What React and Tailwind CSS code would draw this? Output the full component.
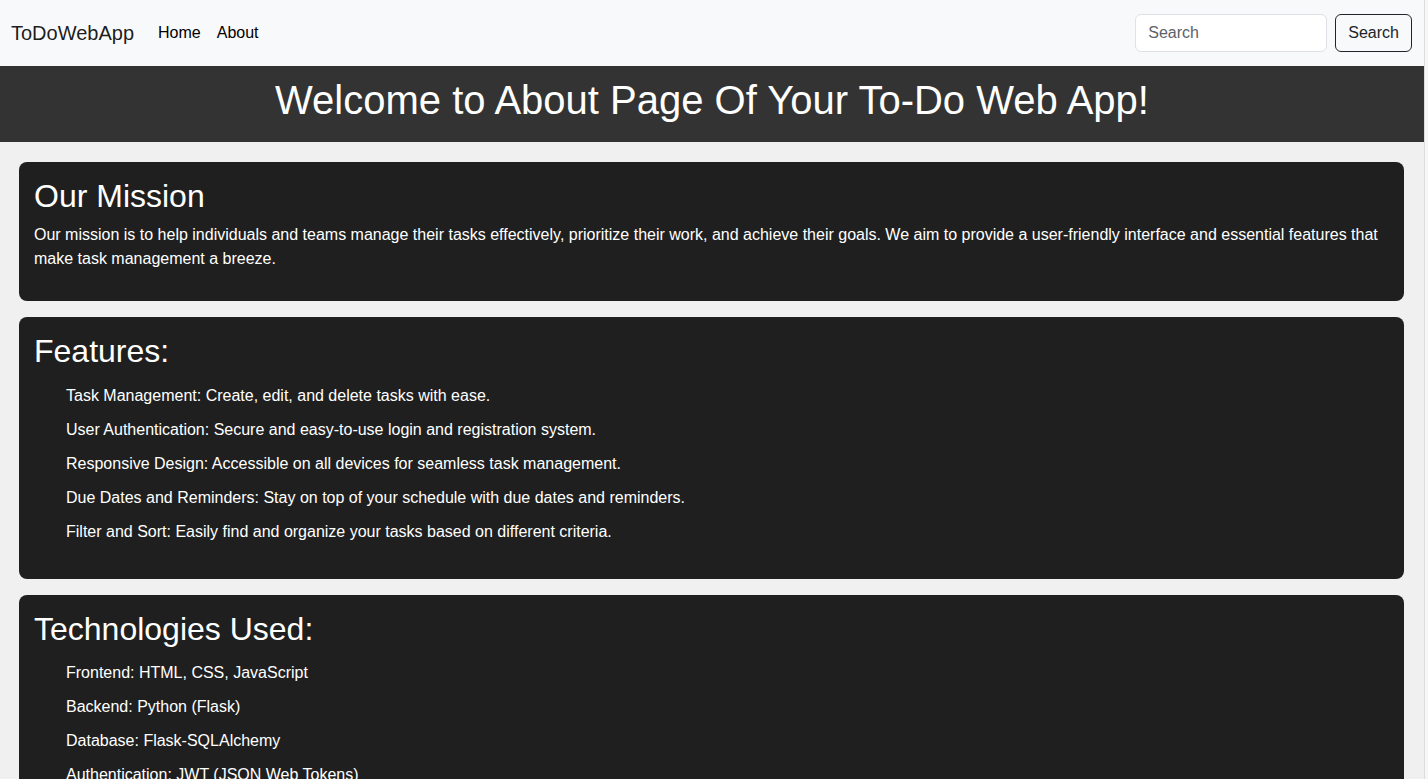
import React from "react";

const features = [
  "Task Management: Create, edit, and delete tasks with ease.",
  "User Authentication: Secure and easy-to-use login and registration system.",
  "Responsive Design: Accessible on all devices for seamless task management.",
  "Due Dates and Reminders: Stay on top of your schedule with due dates and reminders.",
  "Filter and Sort: Easily find and organize your tasks based on different criteria.",
];

const tech = [
  "Frontend: HTML, CSS, JavaScript",
  "Backend: Python (Flask)",
  "Database: Flask-SQLAlchemy",
  "Authentication: JWT (JSON Web Tokens)",
  "Deployment: Heroku",
];

function Card({ title, children }) {
  return (
    <section className="bg-[#1f1f1f] text-white rounded-lg p-[15px] mb-4">
      <h2 className="text-[32px] leading-[1.2] font-normal mb-2">{title}</h2>
      {children}
    </section>
  );
}

function List({ items }) {
  return (
    <ul className="pl-8 mb-[15px]">
      {items.map((t) => (
        <li key={t} className="py-[5px] text-base leading-6">
          {t}
        </li>
      ))}
    </ul>
  );
}

export default function App() {
  return (
    <div
      className="flex min-h-[779px] bg-[#f0f0f0]"
      style={{ fontFamily: '"Liberation Sans", Arial, sans-serif' }}
    >
      <div className="flex-1 min-w-0">
        <nav className="h-[66px] bg-[#f8f9fa] flex items-center justify-between px-3">
          <div className="flex items-center">
            <span className="text-[20px] text-black/90 -ml-px">ToDoWebApp</span>
            <div className="flex items-center ml-4">
              <a className="px-2 py-2 text-base text-black">Home</a>
              <a className="px-2 py-2 text-base text-black">About</a>
            </div>
          </div>
          <form className="flex items-center gap-2" onSubmit={(e) => e.preventDefault()}>
            <input
              type="search"
              placeholder="Search"
              className="w-[192px] h-[38px] px-3 text-base bg-white border border-[#dee2e6] rounded-md text-[#212529] placeholder:text-[#5f6368] outline-none"
            />
            <button className="h-[38px] px-3 text-base text-[#212529] border border-[#212529] rounded-md bg-transparent">
              Search
            </button>
          </form>
        </nav>
        <header className="bg-[#333333] text-white text-center p-[10px]">
          <h1 className="text-[40px] leading-[1.2] font-normal mb-2">
            Welcome to About Page Of Your To-Do Web App!
          </h1>
        </header>
        <main className="pl-[19px] pr-5 pt-5">
          <Card title="Our Mission">
            <p className="text-base leading-6 mb-[15px]">
              Our mission is to help individuals and teams manage their tasks effectively, prioritize their work, and
              achieve their goals. We aim to provide a user-friendly interface and essential features that make task
              management a breeze.
            </p>
          </Card>
          <Card title="Features:">
            <List items={features} />
          </Card>
          <Card title="Technologies Used:">
            <List items={tech} />
          </Card>
        </main>
      </div>
      <div className="w-[4px] shrink-0 border-l border-[#dcdcdc] bg-[#f7f7f7]" />
    </div>
  );
}
